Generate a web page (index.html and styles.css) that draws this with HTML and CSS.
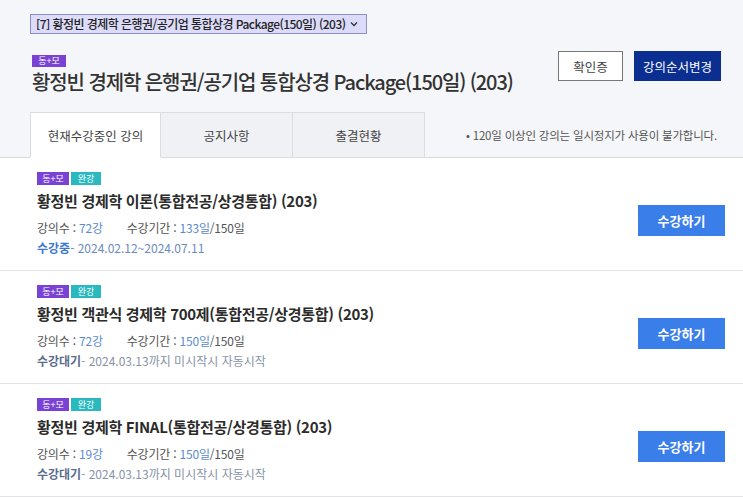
FILE: index.html
```html
<!DOCTYPE html>
<html lang="ko">
<head>
<meta charset="utf-8">
<link rel="stylesheet" href="styles.css">
</head>
<body>
<div class="top">
  <div class="select"><span>[7] 황정빈 경제학 은행권/공기업 통합상경 Package(150일) (203)</span><svg class="chev" width="8" height="6" viewBox="0 0 8 6"><path d="M1 1.5 L4 4.5 L7 1.5" fill="none" stroke="#333" stroke-width="1.3"/></svg></div>
  <div class="head">
    <div class="head-left">
      <span class="badge purple">동+모</span>
      <h1 class="title">황정빈 경제학 은행권/공기업 통합상경 Package(150일) (203)</h1>
    </div>
    <div class="head-btns">
      <button class="btn-outline">확인증</button>
      <button class="btn-navy">강의순서변경</button>
    </div>
  </div>
  <div class="tabrow">
    <div class="tabs">
      <div class="tab active">현재수강중인 강의</div>
      <div class="tab">공지사항</div>
      <div class="tab">출결현황</div>
    </div>
    <div class="note">• 120일 이상인 강의는 일시정지가 사용이 불가합니다.</div>
  </div>
</div>
<div class="list">
  <div class="item">
    <div class="info">
      <div class="badges"><span class="badge purple">동+모</span><span class="badge teal">완강</span></div>
      <div class="ltitle">황정빈 경제학 이론(통합전공/상경통합) (203)</div>
      <div class="meta">강의수 : <span class="num">72강</span><span class="gap"></span>수강기간 : <span class="num">133일</span>/150일</div>
      <div class="status on"><b>수강중</b>- 2024.02.12~2024.07.11</div>
    </div>
    <button class="btn-blue">수강하기</button>
  </div>
  <div class="item">
    <div class="info">
      <div class="badges"><span class="badge purple">동+모</span><span class="badge teal">완강</span></div>
      <div class="ltitle">황정빈 객관식 경제학 700제(통합전공/상경통합) (203)</div>
      <div class="meta">강의수 : <span class="num">72강</span><span class="gap"></span>수강기간 : <span class="num">150일</span>/150일</div>
      <div class="status wait"><b>수강대기</b>- 2024.03.13까지 미시작시 자동시작</div>
    </div>
    <button class="btn-blue">수강하기</button>
  </div>
  <div class="item">
    <div class="info">
      <div class="badges"><span class="badge purple">동+모</span><span class="badge teal">완강</span></div>
      <div class="ltitle">황정빈 경제학 FINAL(통합전공/상경통합) (203)</div>
      <div class="meta">강의수 : <span class="num">19강</span><span class="gap"></span>수강기간 : <span class="num">150일</span>/150일</div>
      <div class="status wait"><b>수강대기</b>- 2024.03.13까지 미시작시 자동시작</div>
    </div>
    <button class="btn-blue">수강하기</button>
  </div>
</div>
</body>
</html>
```
FILE: styles.css
```css
* { box-sizing: border-box; }
html, body { margin: 0; padding: 0; }
body {
  font-family: "Noto Sans CJK KR", "Noto Sans", sans-serif;
  color: #333;
  background: #fff;
  width: 743px;
  overflow: hidden;
}
.top {
  background: #f5f6f9;
  padding: 14px 22px 0 30px;
  border-bottom: 1px solid #d9d9de;
}
.select {
  display: flex;
  align-items: center;
  width: 337px;
  height: 20px;
  padding: 0 5px;
  background: #dcdcfa;
  border: 1px solid #8f8fc4;
  font-size: 12px;
  line-height: 18px;
  font-weight: 500;
  color: #222;
  letter-spacing: -0.55px;
  white-space: nowrap;
}
.chev { margin-left: 5px; flex: none; }
.head {
  display: flex;
  justify-content: space-between;
  align-items: flex-start;
  margin-top: 17px;
}
.head-left {
  display: flex;
  flex-direction: column;
  align-items: flex-start;
  padding-left: 2px;
  padding-top: 4px;
}
.badge {
  display: inline-flex;
  align-items: center;
  justify-content: center;
  height: 13px;
  width: 32px;
  font-size: 9px;
  line-height: 13px;
  color: #fff;
}
.head-left .badge { width: 34px; height: 12px; line-height: 12px; }
.purple { background: #7a42d4; }
.teal { background: #2ab9bf; margin-left: 2px; width: 30px; }
.title {
  margin: 4px 0 0;
  font-size: 20px;
  line-height: 22px;
  font-weight: 500;
  color: #333;
  letter-spacing: -1.1px;
}
.head-btns { display: flex; gap: 11px; }
.head-btns button {
  height: 30px;
  font-family: inherit;
  font-size: 12.5px;
  cursor: pointer;
}
.btn-outline {
  width: 65px;
  background: #fff;
  border: 1px solid #777;
  color: #444;
}
.btn-navy {
  width: 87px;
  background: #0b2e91;
  border: 1px solid #0b2e91;
  color: #fff;
}
.tabrow {
  display: flex;
  justify-content: space-between;
  align-items: center;
  margin-top: 19px;
}
.tabs { display: flex; margin-bottom: -1px; }
.tab {
  height: 46px;
  width: 132px;
  display: flex;
  align-items: center;
  justify-content: center;
  font-size: 12.5px;
  color: #444;
  background: #f0f1f4;
  border: 1px solid #dcdce0;
  border-left: none;
}
.tab.active {
  width: 131px;
  background: #fff;
  border-left: 1px solid #dcdce0;
  border-bottom-color: #fff;
}
.note {
  font-size: 11.5px;
  color: #555;
  letter-spacing: -0.2px;
  margin-right: 4px;
}
.list { background: #fff; }
.item {
  display: flex;
  justify-content: space-between;
  align-items: center;
  padding: 14px 18px 13px 37px;
  border-bottom: 1px solid #e3e3e6;
}
.badges { display: flex; height: 13px; }
.ltitle {
  margin-top: 6px;
  font-size: 15px;
  line-height: 20px;
  font-weight: 700;
  color: #2b2b2b;
  letter-spacing: -0.3px;
}
.meta {
  margin-top: 8px;
  font-size: 12px;
  line-height: 18px;
  color: #555;
  letter-spacing: -0.2px;
}
.num { color: #5c8bcc; }
.gap { display: inline-block; width: 24px; }
.status {
  margin-top: 2px;
  font-size: 12px;
  line-height: 18px;
}
.status.on { color: #6a8cc0; }
.status.on b { color: #3b78d3; }
.status.wait { color: #8793a6; }
.status.wait b { color: #5a6d8c; }
.btn-blue {
  width: 87px;
  height: 31px;
  margin-top: 12px;
  background: #3a7ee9;
  border: none;
  color: #fff;
  font-family: inherit;
  font-size: 13px;
  font-weight: 700;
  cursor: pointer;
}
```
